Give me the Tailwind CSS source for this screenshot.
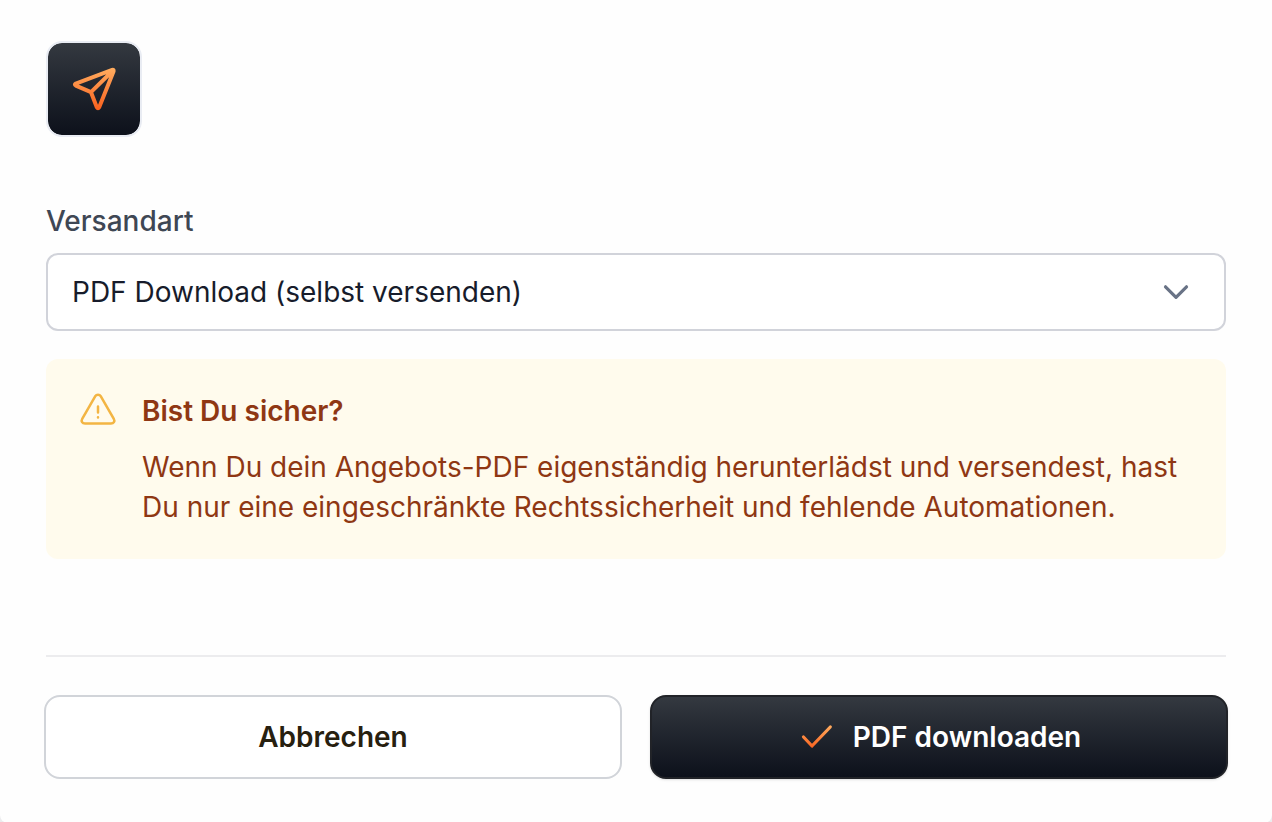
<!DOCTYPE html>
<html lang="de">
<head>
  <meta charset="UTF-8" />
  <meta name="viewport" content="width=device-width, initial-scale=1.0" />
  <title>Angebot versenden</title>
  <script src="https://cdn.jsdelivr.net/npm/@tailwindcss/browser@4"></script>
</head>
<body class="min-h-screen flex flex-col bg-[#ececee] font-['Inter',sans-serif] text-[28px] leading-10">
  <main class="grow bg-[#fefefe] rounded-b-lg px-[46px] pt-[41px] pb-11">
    <div class="size-24 flex items-center justify-center rounded-2xl border-2 border-[#e9ecf3] bg-linear-to-b from-[#343940] to-[#0d111b] bg-clip-padding">
      <svg class="size-12" viewBox="0 0 48 48" fill="none" stroke="url(#orange)" stroke-width="4" stroke-linejoin="round" stroke-linecap="round">
        <defs>
          <linearGradient id="orange" gradientUnits="userSpaceOnUse" x1="24" y1="4" x2="24" y2="44">
            <stop offset="0" stop-color="#ffab5e" />
            <stop offset="1" stop-color="#f9621f" />
          </linearGradient>
        </defs>
        <path d="M42.2 4.900 5.800 18.600q-1.800 1 0 2L21 27.200l5.800 15q1.200 2 2.400 0L43.600 6.300q.3-1.900-1.400-1.400ZM21 27.200 43 5.500" />
      </svg>
    </div>

    <form>
      <label for="versandart" class="block mt-16 font-medium text-[#3f4754]">Versandart</label>
      <div class="relative mt-3">
        <select id="versandart" class="block w-full h-[78px] appearance-none rounded-xl border-2 border-[#d1d3da] bg-white pl-6 pr-20 text-[#171c2b]">
          <option>PDF Download (selbst versenden)</option>
        </select>
        <svg class="absolute right-9 top-1/2 -translate-y-1/2 w-7 h-7 pointer-events-none" viewBox="0 0 28 28" fill="none" stroke="#697386" stroke-width="3.2" stroke-linecap="round" stroke-linejoin="round">
          <path d="m3.500 8.800 10.500 10.500L24.500 8.800" />
        </svg>
      </div>

      <div class="mt-7 flex gap-6 rounded-xl bg-[#fffbed] p-8 text-[#8f3713]">
        <svg class="size-10 shrink-0" viewBox="0 0 40 40" fill="none" stroke="#f3b543" stroke-width="2.500" stroke-linecap="round" stroke-linejoin="round">
          <path d="M17.300 5.200 4.200 27.800c-1.400 2.500.1 4.700 2.800 4.700h26c2.700 0 4.200-2.200 2.800-4.700L22.700 5.200c-1.200-2-4.200-2-5.400 0Z" />
          <path d="M20 15.500v6M20 26.300v.1" />
        </svg>
        <div>
          <h3 class="font-semibold">Bist Du sicher?</h3>
          <p class="mt-4">Wenn Du dein Angebots-PDF eigenständig herunterlädst und versendest, hast Du nur eine eingeschränkte Rechtssicherheit und fehlende Automationen.</p>
        </div>
      </div>

      <hr class="mt-24 border-t-2 border-[#ececee]" />

      <div class="-mx-0.5 mt-[38px] grid grid-cols-2 gap-7 font-semibold">
        <button type="button" class="h-21 rounded-2xl border-2 border-[#d1d4d9] bg-white text-[#27200f]">Abbrechen</button>
        <button type="button" class="h-21 flex items-center justify-center gap-4 rounded-2xl border-2 border-[#212328] bg-linear-to-b from-[#343940] to-[#0d111b] text-white shadow-sm">
          <svg class="size-10" viewBox="0 0 40 40" fill="none" stroke="url(#check)" stroke-width="3.200" stroke-linecap="round" stroke-linejoin="round">
            <defs>
              <linearGradient id="check" gradientUnits="userSpaceOnUse" x1="20" y1="9" x2="20" y2="31">
                <stop offset="0" stop-color="#ffab5e" />
                <stop offset="1" stop-color="#f9621f" />
              </linearGradient>
            </defs>
            <path d="m6.500 20 8.500 9L33.300 10" />
          </svg>
          PDF downloaden
        </button>
      </div>
    </form>
  </main>
</body>
</html>
